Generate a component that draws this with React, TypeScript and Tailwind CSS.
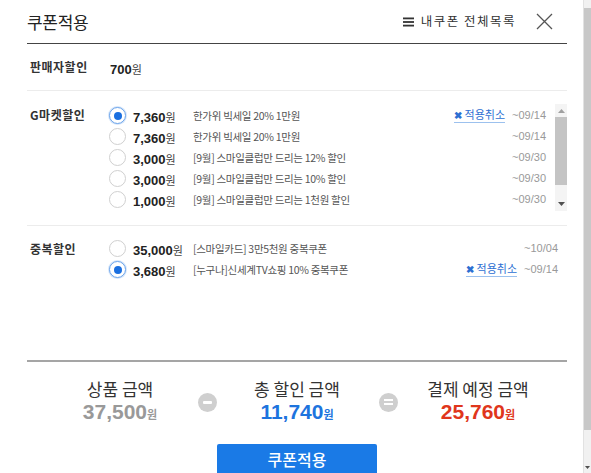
import React from "react";

const KR = { fontFamily: '"Noto Sans CJK KR", "Noto Sans", sans-serif' };
const NUM = { fontFamily: '"Liberation Sans", "Noto Sans CJK KR", sans-serif' };

function Radio({ checked }: { checked?: boolean }) {
  return checked ? (
    <span className="flex h-[17px] w-[17px] shrink-0 items-center justify-center rounded-full border border-[#6aa3ea] bg-white shadow-[0_0_0_1px_#d6e6fa]">
      <span className="h-[8px] w-[8px] rounded-full bg-[#1a6fe0]" />
    </span>
  ) : (
    <span className="h-[17px] w-[17px] shrink-0 rounded-full border border-[#d0d0d0] bg-white" />
  );
}

function Cancel() {
  return (
    <span className="mr-[5px] flex items-center gap-[3px] border-b border-[#9cc1ee] pb-[1px] text-[11px] leading-[13px] text-[#2d6fd2]">
      <span className="text-[10px] font-bold">✖</span>
      <span>적용취소</span>
    </span>
  );
}

type Row = { checked?: boolean; amount: string; desc: string; date: string; cancel?: boolean };

function CouponRow({ r }: { r: Row }) {
  return (
    <div className="flex h-[21px] items-center">
      <Radio checked={r.checked} />
      <span className="ml-[7px] w-[60px] shrink-0 text-[#222]">
        <span style={NUM} className="text-[13px] font-bold">{r.amount}</span>
        <span className="text-[11px] text-[#444]">원</span>
      </span>
      <span className="flex-1 truncate text-[10.5px] tracking-[-0.3px] text-[#555]">{r.desc}</span>
      {r.cancel && <Cancel />}
      <span style={NUM} className="w-[36px] text-right text-[11px] text-[#999]">{r.date}</span>
    </div>
  );
}

export default function App() {
  const gmarket: Row[] = [
    { checked: true, amount: "7,360", desc: "한가위 빅세일 20% 1만원", date: "~09/14", cancel: true },
    { amount: "7,360", desc: "한가위 빅세일 20% 1만원", date: "~09/14" },
    { amount: "3,000", desc: "[9월] 스마일클럽만 드리는 12% 할인", date: "~09/30" },
    { amount: "3,000", desc: "[9월] 스마일클럽만 드리는 10% 할인", date: "~09/30" },
    { amount: "1,000", desc: "[9월] 스마일클럽만 드리는 1천원 할인", date: "~09/30" },
  ];
  const dup: Row[] = [
    { amount: "35,000", desc: "[스마일카드] 3만5천원 중복쿠폰", date: "~10/04" },
    { checked: true, amount: "3,680", desc: "[누구나]신세계TV쇼핑 10% 중복쿠폰", date: "~09/14", cancel: true },
  ];

  return (
    <div style={KR} className="flex h-[473px] w-[591px] overflow-hidden bg-white text-[#222]">
      <div className="flex min-w-0 flex-1 flex-col pl-[27px] pr-[16px]">
        {/* header */}
        <div className="flex h-[44px] shrink-0 items-center border-b border-[#444]">
          <span className="text-[17px] tracking-[-0.3px] text-[#222]">쿠폰적용</span>
          <span className="ml-auto flex items-center gap-[7px] text-[12.5px] text-[#333]">
            <svg width="11" height="10" viewBox="0 0 11 10">
              <rect x="0" y="0.5" width="11" height="1.8" fill="#333" />
              <rect x="0" y="4.1" width="11" height="1.8" fill="#333" />
              <rect x="0" y="7.7" width="11" height="1.8" fill="#333" />
            </svg>
            <span className="tracking-[1.5px]">내쿠폰 전체목록</span>
          </span>
          <svg className="ml-[20px] mr-[14px]" width="17" height="17" viewBox="0 0 17 17">
            <path d="M1 1L16 16M16 1L1 16" stroke="#555" strokeWidth="1.3" />
          </svg>
        </div>

        {/* seller discount */}
        <div className="flex h-[47px] shrink-0 items-center border-b border-[#ececec] pl-[3px]">
          <span className="w-[80px] text-[12px] font-bold tracking-[0.5px] text-[#333]">판매자할인</span>
          <span className="text-[#222]">
            <span style={NUM} className="text-[13px] font-bold">700</span>
            <span className="text-[11px] text-[#444]">원</span>
          </span>
        </div>

        {/* gmarket */}
        <div className="flex h-[135px] shrink-0 border-b border-[#ececec] pl-[3px] pt-[13px]">
          <span className="w-[79px] pt-[2px] text-[12px] font-bold tracking-[0.5px] text-[#333]">G마켓할인</span>
          <div className="flex h-[107px] flex-1">
            <div className="flex flex-1 flex-col pr-[9px] pt-[1px]">
              {gmarket.map((r, i) => (
                <CouponRow key={i} r={r} />
              ))}
            </div>
            <div className="flex w-[12px] flex-col items-center bg-[#f4f4f4]">
              <svg className="mt-[4px]" width="7" height="5" viewBox="0 0 7 5">
                <path d="M0 5L3.5 1L7 5Z" fill="#a0a0a0" />
              </svg>
              <div className="mt-[4px] h-[68px] w-[12px] bg-[#c4c4c4]" />
              <svg className="mt-auto mb-[4px]" width="7" height="5" viewBox="0 0 7 5">
                <path d="M0 0L3.5 4L7 0Z" fill="#505050" />
              </svg>
            </div>
          </div>
        </div>

        {/* dup */}
        <div className="flex h-[136px] shrink-0 border-b-2 border-[#a5a5a5] pl-[3px] pt-[12px]">
          <span className="w-[79px] pt-[2px] text-[12px] font-bold tracking-[0.5px] text-[#333]">중복할인</span>
          <div className="flex flex-1 flex-col pr-[9px]">
            {dup.map((r, i) => (
              <CouponRow key={i} r={r} />
            ))}
          </div>
        </div>

        {/* summary */}
        <div className="ml-[23px] mt-[16px] flex items-center">
          <div className="flex w-[140px] flex-col items-center">
            <span className="text-[17px] leading-[22px] text-[#333]">상품 금액</span>
            <span className="leading-[24px] text-[#999]">
              <span style={NUM} className="text-[21px] font-bold">37,500</span>
              <span className="text-[11px] font-bold">원</span>
            </span>
          </div>
          <div className="flex w-[34px] justify-center">
            <span className="flex h-[19px] w-[19px] items-center justify-center rounded-full bg-[#cfcfcf]">
              <span className="h-[3px] w-[9px] rounded-[1px] bg-white" />
            </span>
          </div>
          <div className="flex w-[146px] flex-col items-center">
            <span className="text-[17px] leading-[22px] text-[#333]">총 할인 금액</span>
            <span className="leading-[24px] text-[#1d74de]">
              <span style={NUM} className="text-[21px] font-bold">11,740</span>
              <span className="text-[11px] font-bold">원</span>
            </span>
          </div>
          <div className="flex w-[36px] justify-center">
            <span className="flex h-[19px] w-[19px] flex-col items-center justify-center gap-[2px] rounded-full bg-[#cfcfcf]">
              <span className="h-[2px] w-[9px] bg-white" />
              <span className="h-[2px] w-[9px] bg-white" />
            </span>
          </div>
          <div className="flex w-[144px] flex-col items-center">
            <span className="text-[17px] leading-[22px] text-[#333]">결제 예정 금액</span>
            <span className="leading-[24px] text-[#e0361c]">
              <span style={NUM} className="text-[21px] font-bold">25,760</span>
              <span className="text-[11px] font-bold">원</span>
            </span>
          </div>
        </div>

        <div className="mt-[18px] flex justify-center">
          <button className="h-[40px] w-[160px] rounded-[2px] bg-[#1a7ae6] pb-[10px] text-[16px] font-medium text-white">
            쿠폰적용
          </button>
        </div>
      </div>

      {/* page scrollbar */}
      <div className="flex w-[8px] shrink-0 flex-col border-l border-[#e2e2e2] bg-[#f1f1f1]">
        <div className="h-[8px]" />
        <div className="h-[422px] bg-[#c8c8c8]" />
        <div className="mt-auto mb-[3px] flex justify-center">
          <svg width="5" height="4" viewBox="0 0 5 4">
            <path d="M0 0L2.5 3L5 0Z" fill="#505050" />
          </svg>
        </div>
      </div>
    </div>
  );
}
